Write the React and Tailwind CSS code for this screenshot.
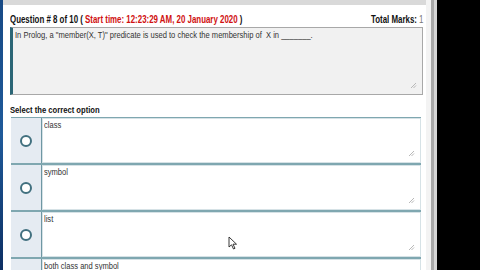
import React from 'react';

const options = ['class', 'symbol', 'list', 'both class and symbol'];

function Grip() {
  return (
    <svg width="7" height="7" viewBox="0 0 7 7" className="absolute right-[5px] bottom-[5px]">
      <path d="M6 1 L1 6 M6 3.5 L3.5 6" stroke="#b8b8b8" strokeWidth="1" />
    </svg>
  );
}

// the capture is squeezed sideways, so text is narrowed with scale-x
function Narrow({ children, className = '' }) {
  return <span className={`inline-block whitespace-nowrap origin-left scale-x-[0.84] ${className}`}>{children}</span>;
}

function OptionRow({ label }) {
  return (
    <div className="flex shrink-0 h-[47px] border-b-2 border-[#7fa7b0]">
      <div className="w-[31px] bg-[#e5ebf2] border-r border-[#6f97a3] flex items-center justify-center">
        <div className="w-[12px] h-[12px] rounded-full border-2 border-[#41707f] bg-white" />
      </div>
      <div className="relative flex-1 bg-white border border-[#d6e2e6] px-[1px] pt-[1px] text-[9px] leading-[11px] text-[#333]">
        <Narrow>{label}</Narrow>
        <Grip />
      </div>
    </div>
  );
}

export default function App() {
  return (
    <div className="relative w-[480px] h-[270px] flex bg-black overflow-hidden" style={{ fontFamily: '"Liberation Sans", Arial, sans-serif' }}>
      <div className="w-[3px] bg-gradient-to-b from-[#184a86] via-[#1f5a9a] to-[#0d2f63]" />
      <div className="w-[423px] bg-white flex flex-col overflow-hidden">
        <div className="h-[5px] shrink-0 bg-[#d9d9d9]" />
        <div className="pl-[7px] pr-[3px] flex flex-col">
          <div className="flex shrink-0 items-end justify-between h-[22px] pb-[1px] text-[10px] leading-[12px] font-bold text-[#111]">
            <span className="inline-block whitespace-nowrap origin-left scale-x-[0.79]">
              Question # 8 of 10 ( <span className="text-[#d01010]">Start time: 12:23:29 AM, 20 January 2020</span> )
            </span>
            <span className="inline-block whitespace-nowrap origin-right scale-x-[0.79]">
              Total Marks: <span className="font-normal text-[#777]">1</span>
            </span>
          </div>
          <div className="relative shrink-0 h-[68px] bg-[#f1f1f1] border border-[#a8a8a8] border-l-[3px] border-l-[#2c6676] pl-[2px] pt-[2px] text-[9px] leading-[11px] text-[#333]">
            <Narrow className="scale-x-[0.83]">In Prolog, a "member(X, T)" predicate is used to check the membership of&nbsp; X in _______.</Narrow>
            <Grip />
          </div>
          <div className="mt-[10px] shrink-0 text-[9px] leading-[11px] font-bold text-[#111]">
            <Narrow className="scale-x-[0.85]">Select the correct option</Narrow>
          </div>
          <div className="mt-[1px] ml-[1px] mr-[2px] shrink-0 border-t border-[#7fa7b0]">
            {options.map((o) => (
              <OptionRow key={o} label={o} />
            ))}
          </div>
        </div>
      </div>
      <div className="w-[5px] bg-[#f3f3f3]" />
      <div className="w-[3px] bg-[#a9a9a9]" />
      <div className="w-[3px] bg-[#d6d6d6]" />
      <div className="flex-1 bg-black" />
      <svg className="absolute left-[228px] top-[236px]" width="10" height="14" viewBox="0 0 10 14">
        <path d="M1 1 L1 11 L3.5 8.8 L5.5 13 L7 12.3 L5 8.2 L8.5 8.2 Z" fill="white" stroke="#222" strokeWidth="0.9" strokeLinejoin="round" />
      </svg>
    </div>
  );
}
